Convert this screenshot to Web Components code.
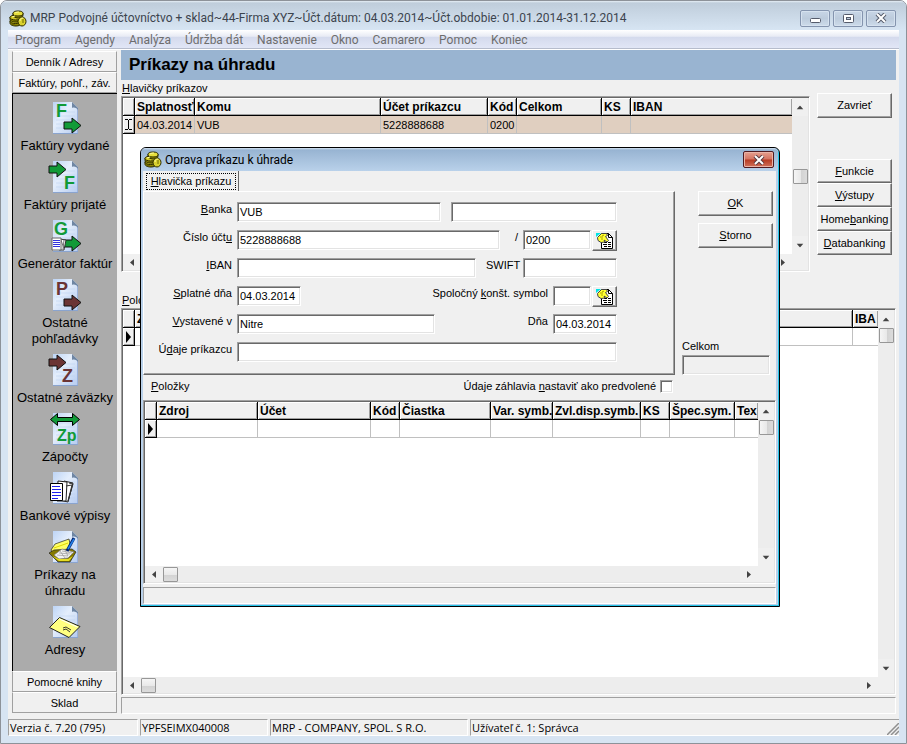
<!DOCTYPE html>
<html lang="sk">
<head>
<meta charset="utf-8">
<title>MRP Podvojné účtovníctvo + sklad</title>
<style>
	body {
		margin: 0;
		background: #fff;
		color: #000;
		font: 11px/15px "Liberation Sans", Arial, sans-serif;
	}
	.workspace {
		display: flex;
		flex: 1;
		gap: 4px;
		padding: 0 3px 0 4px;
	}
	.main {
		display: flex;
		flex: 1;
		flex-direction: column;
		min-width: 0;
		padding-bottom: 1px;
	}
	h1 {
		margin: 0;
		padding: 0 8px;
		background: #99b4d1;
		font-size: 17px;
		line-height: 30px;
	}
	.top {
		display: flex;
		gap: 7px;
		padding-right: 4px;
	}
	.orders {
		flex: 1;
		min-width: 0;
	}
	.orders mrp-grid {
		height: 176px;
	}
	.caption {
		padding-left: 1px;
		line-height: 16px;
	}
	.actions {
		display: flex;
		flex-direction: column;
		width: 75px;
		padding-top: 13px;
	}
	.actions mrp-button:first-child {
		margin-bottom: 41px;
	}
	.items {
		margin-top: 20px;
	}
	.main > mrp-grid {
		flex: 1;
	}
	.main > mrp-panel {
		height: 17px;
		margin-top: 2px;
	}
	.form {
		display: flex;
		flex-direction: column;
		gap: 8px;
	}
	.row {
		display: flex;
		gap: 10px;
		height: 20px;
	}
	.grow {
		flex: 1;
	}
	.end {
		margin-left: auto;
	}
	.pair {
		display: flex;
		gap: 1px;
	}
	.default {
		display: flex;
		justify-content: space-between;
		height: 25px;
		padding: 0 103px 0 8px;
		line-height: 22px;
	}
</style>
</head>
<body>

<mrp-window caption="MRP Podvojné účtovníctvo + sklad~44-Firma XYZ~Účt.dátum: 04.03.2014~Účt.obdobie: 01.01.2014-31.12.2014">
	<mrp-menu slot="menu" items="Program|Agendy|Analýza|Údržba dát|Nastavenie|Okno|Camarero|Pomoc|Koniec"></mrp-menu>

	<div class="workspace">
		<mrp-sidebar>
			<mrp-group slot="before">Denník / Adresy</mrp-group>
			<mrp-group slot="before">Faktúry, pohľ., záv.</mrp-group>
			<mrp-shortcut icon="issued">Faktúry vydané</mrp-shortcut>
			<mrp-shortcut icon="received">Faktúry prijaté</mrp-shortcut>
			<mrp-shortcut icon="generator">Generátor faktúr</mrp-shortcut>
			<mrp-shortcut icon="claims">Ostatné pohľadávky</mrp-shortcut>
			<mrp-shortcut icon="debts">Ostatné záväzky</mrp-shortcut>
			<mrp-shortcut icon="offsets">Zápočty</mrp-shortcut>
			<mrp-shortcut icon="statements">Bankové výpisy</mrp-shortcut>
			<mrp-shortcut icon="orders">Príkazy na úhradu</mrp-shortcut>
			<mrp-shortcut icon="addresses">Adresy</mrp-shortcut>
			<mrp-group slot="after">Pomocné knihy</mrp-group>
			<mrp-group slot="after">Sklad</mrp-group>
		</mrp-sidebar>

		<div class="main">
			<h1>Príkazy na úhradu</h1>
			<div class="top">
				<div class="orders">
					<div class="caption"><u>H</u>lavičky príkazov</div>
					<mrp-grid
						columns="Splatnosť:60|Komu:186|Účet príkazcu:107|Kód:29|Celkom:85|KS:29|IBAN"
						row="04.03.2014|VUB|5228888688|0200|||"
						marker="edit" selected scroll="0.5"></mrp-grid>
				</div>
				<div class="actions">
					<mrp-button>Zavrieť</mrp-button>
					<mrp-button flat><u>F</u>unkcie</mrp-button>
					<mrp-button flat><u>V</u>ýstupy</mrp-button>
					<mrp-button flat>Home<u>b</u>anking</mrp-button>
					<mrp-button flat><u>D</u>atabanking</mrp-button>
				</div>
			</div>
			<div class="caption items"><u>P</u>oložky</div>
			<mrp-grid columns="Zdroj|IBA:25" row="|" marker="current" scroll="0"></mrp-grid>
			<mrp-panel></mrp-panel>
		</div>
	</div>

	<mrp-statusbar slot="status" items="Verzia č. 7.20 (795):130|YPFSEIMX040008:128|MRP - COMPANY, SPOL. S R.O.:198|Užívateľ č. 1: Správca"></mrp-statusbar>

	<mrp-dialog slot="dialog" caption="Oprava príkazu k úhrade">
		<span slot="tab"><u>H</u>lavička príkazu</span>
		<div class="form">
			<div class="row">
				<mrp-field class="grow" lead value="VUB"><u>B</u>anka</mrp-field>
				<mrp-field bare value="" name="Názov banky" style="--box: 166px"></mrp-field>
			</div>
			<div class="row">
				<mrp-field class="grow" lead value="5228888688">Číslo účt<u>u</u></mrp-field>
				<div class="pair">
					<mrp-field value="0200" style="--box: 68px; --label: 8px">/</mrp-field>
					<mrp-lookup></mrp-lookup>
				</div>
			</div>
			<div class="row">
				<mrp-field class="grow" lead value=""><u>I</u>BAN</mrp-field>
				<mrp-field value="" style="--box: 94px; --label: 32px">SWIFT</mrp-field>
			</div>
			<div class="row">
				<mrp-field lead value="04.03.2014" style="--box: 64px"><u>S</u>platné dňa</mrp-field>
				<div class="pair end">
					<mrp-field value="" style="--box: 38px">Spoločný <u>k</u>onšt. symbol</mrp-field>
					<mrp-lookup></mrp-lookup>
				</div>
			</div>
			<div class="row">
				<mrp-field lead value="Nitre" style="--box: 198px"><u>V</u>ystavené v</mrp-field>
				<mrp-field class="end" value="04.03.2014" style="--box: 64px">Dňa</mrp-field>
			</div>
			<div class="row">
				<mrp-field class="grow" lead value="">Ú<u>d</u>aje príkazcu</mrp-field>
			</div>
		</div>
		<mrp-button slot="buttons"><u>O</u>K</mrp-button>
		<mrp-button slot="buttons"><u>S</u>torno</mrp-button>
		<mrp-field slot="total" stacked value="">Celkom</mrp-field>
		<div slot="items" class="default">
			<span><u>P</u>oložky</span>
			<mrp-check>Údaje záhlavia <u>n</u>astaviť ako predvolené</mrp-check>
		</div>
		<mrp-grid slot="grid"
			columns="Zdroj:101|Účet:113|Kód:29|Čiastka:91|Var. symb.:62|Zvl.disp.symb.:88|KS:29|Špec.sym.:65|Tex"
			row="||||||||" marker="current" scroll="0"></mrp-grid>
	</mrp-dialog>
</mrp-window>

<script>
//#region HELPERS
const ui_font = 'Roboto, "Noto Sans", sans-serif';

function define(name, html, setup) {
	const template = document.createElement("template");
	template.innerHTML = html;
	window.customElements.define(
		name,
		class extends HTMLElement {
			constructor() {
				super();
				this._shadowRoot = this.attachShadow({mode: "open"});
				this._shadowRoot.appendChild(template.content.cloneNode(true));
			}
			connectedCallback() {
				if (setup && !this._ready) {
					this._ready = true;
					setup(this, this._shadowRoot);
				}
			}
		}
	);
}
//#endregion HELPERS

//#region ICONS
const coins = /* html */ `
<svg width="18" height="17" viewBox="0 0 18 17" aria-hidden="true">
  <g stroke="#2c2a00" stroke-width="1">
    <path d="M1 11v2c0 2 3 3 6 3s5-1 5-3v-2z" fill="#8c8500"/>
    <ellipse cx="6.500" cy="11" rx="5.500" ry="2.500" fill="#cfc623"/>
    <path d="M1 7v2c0 2 3 3 6 3s5-1 5-3V7z" fill="#8c8500"/>
    <ellipse cx="6.500" cy="7.500" rx="5.500" ry="2.500" fill="#cfc623"/>
    <path d="M4 3v2c0 1 2 3 5 3s5-1 5-3V3z" fill="#8c8500"/>
    <ellipse cx="9" cy="3.500" rx="5" ry="2.500" fill="#e6de3c"/>
    <ellipse cx="13" cy="11.500" rx="4" ry="4.500" fill="#d9d12e"/>
  </g>
  <path d="M11 11c0-2 1-3 3-3M6 3c1-1 3-1 4-1M3 7l3-1" stroke="#fffb9a" fill="none"/>
  <path d="M14 9v4M2 14l4 1M6 6l4 1" stroke="#6d6800" fill="none"/>
</svg>`;

const page = /* html */ `
  <path d="M4 0h19l6 6v26H4z" fill="url(#sheet)"/>
  <path d="M4 31h25v1H4z" fill="#8aa4cf"/>
  <path d="M28 7h1v24h-1z" fill="#9bb2dc"/>
  <path d="M23 0l6 6v2c-1-2-4-3-6-2z" fill="#6f86a3"/>
  <path d="M7 10h19M7 14h19M7 18h19M7 22h19M7 26h19" stroke="#b9cff0" opacity=".5"/>`;
const arrow = (x, y, color) =>
	`<path d="M${x} ${y + 4}h8v-4l9 7.500-9 7.500v-4h-8z" fill="${color}" stroke="#111"/>`;
const letter = (text, x, y, color, size = 18) =>
	`<text x="${x}" y="${y}" fill="${color}" font-family="Liberation Sans" font-weight="bold" font-size="${size}">${text}</text>`;
const green = "#119a38";
const brown = "#6b3434";

const icons = {
	issued: letter("F", 7, 15, green) + arrow(15, 16, green),
	received: letter("F", 15, 28, green) + arrow(0, 1, green),
	generator: letter("G", 5, 15, green) + arrow(15, 16, green) + /* html */ `
    <path d="M11 19l6 1-2 10h-5z" fill="#fff" stroke="#333"/>
    <path d="M12 20l3 9M15 20l-1 9" stroke="#777"/>
    <path d="M3 18h9v12H3z" fill="#fff" stroke="#666"/>
    <path d="M4 20.500h7M4 22.500h7M4 24.500h7M4 26.500h7" stroke="#3333dd"/>`,
	claims: letter("P", 7, 16, brown) + arrow(15, 16, brown),
	debts: letter("Z", 13, 28, brown) + arrow(0, 1, brown),
	offsets: letter("Zp", 8, 28, green, 16) +
		`<path d="M1.500 6.500l7-6v4h15v-4l7 6-7 6v-4h-15v4z" fill="${green}" stroke="#000"/>`,
	statements: /* html */ `
    <path d="M15 9l9 2-5 19-8-2z" fill="#fff" stroke="#222"/>
    <path d="M9 9l9 1-1 19H8z" fill="#fff" stroke="#222"/>
    <path d="M17 14l6-1-4 16M20 11l4 1-5 17" fill="none" stroke="#333"/>
    <path d="M1.500 11.500h12v17h-12z" fill="#fff" stroke="#000"/>
    <path d="M3 14.500h8M3 17.500h9M3 20.500h9M3 23.500h9M3 26.500h6" stroke="#2020ee"/>`,
	orders: /* html */ `
    <path d="M2 19l4-6 14-5 1 5-4 8-11 5z" fill="#ffff66" stroke="#222" stroke-width=".700"/>
    <path d="M5 17l14-5" stroke="#e0d800"/>
    <path d="M0 22l5-3 18-1 4 3-6 10H9z" fill="#857a00" stroke="#222" stroke-width=".700"/>
    <path d="M5 24l8-6 12 3-6 6-9 1z" fill="#f2f2f2" stroke="#777" stroke-width=".700"/>
    <path d="M8 24l11 1M10 22l11 1M13 20l10 2M11 20l5 7M16 19l3 6" stroke="#999" stroke-width=".700"/>
    <path d="M3 25l7 5h10l4-5-5 3h-9z" fill="#e6de22"/>
    <path d="M18 20l7-13" stroke="#00236f" stroke-width="3"/>
    <path d="M19 18l6-10" stroke="#2480e8" stroke-width="1.500"/>`,
	addresses: /* html */ `
    <path d="M10.500 11.500l20.500 9-11 11-19.500-10z" fill="#ffff80" stroke="#222"/>
    <path d="M10.500 13l18 8" stroke="#fff"/>
    <path d="M14 22l3-1 5 3M14 24l3-1 4 3" stroke="#222" stroke-width=".900"/>`,
};
//#endregion ICONS

//#region WINDOW
define("mrp-window", /* html */ `
<style>
  * { box-sizing: border-box; }
  :host {
    display: flex;
    flex-direction: column;
    position: relative;
    box-sizing: border-box;
    min-height: 100vh;
    padding: 0 7px 7px;
    border: 1px solid #8d9299;
    border-radius: 7px 7px 0 0;
    background: #d7e4f2;
  }
  header {
    display: flex;
    align-items: center;
    gap: 3px;
    height: 29px;
    margin: 0 -7px;
    padding: 5px 10px 0 8px;
    border-radius: 6px 6px 0 0;
    background: linear-gradient(#e6eef6, #bfcddb 2px, #d7e5f3);
    color: #3c444e;
    font: 12px/20px ${ui_font};
  }
  .caption { flex: 1; min-width: 0; overflow: hidden; white-space: nowrap; }
  button {
    display: flex;
    align-items: center;
    justify-content: center;
    width: 30px;
    height: 17px;
    padding: 0;
    border: 1px solid #8494ae;
    border-radius: 2px;
    background: linear-gradient(#c8d6e6, #bccbdc 50%, #cddbea);
    box-shadow: inset 0 0 0 1px #d6e2ef;
  }
  .body {
    display: flex;
    flex: 1;
    flex-direction: column;
    background: #f0f0f0;
  }
</style>
<header>
  ${coins}
  <span class="caption"></span>
  <button type="button" aria-label="Minimalizovať"><svg width="12" height="11"><rect x="1.500" y="5.500" width="10" height="4" rx="1" fill="#fff" stroke="#555b6b"/></svg></button>
  <button type="button" aria-label="Maximalizovať"><svg width="11" height="9"><rect x=".5" y=".5" width="10" height="8" rx="1" fill="#fff" stroke="#555b6b"/><rect x="3.500" y="3.500" width="4" height="2" fill="#bccbdc" stroke="#555b6b"/></svg></button>
  <button type="button" aria-label="Zavrieť okno"><svg width="12" height="10"><path d="M2 1l8 8M10 1L2 9" stroke="#555b6b" stroke-width="4"/><path d="M2 1l8 8M10 1L2 9" stroke="#fff" stroke-width="2"/></svg></button>
</header>
<div class="body">
  <slot name="menu"></slot>
  <slot></slot>
  <slot name="status"></slot>
</div>
<slot name="dialog"></slot>
`, (host, root) => {
	root.querySelector(".caption").textContent = host.getAttribute("caption");
});

define("mrp-menu", /* html */ `
<style>
  :host {
    display: block;
    border-bottom: 1px solid #fff;
  }
  nav {
    display: flex;
    gap: 14px;
    height: 18px;
    padding: 0 7px;
    border-bottom: 1px solid #b6bccc;
    background: linear-gradient(#fff, #e8ebf5 35%, #d4daed 40%, #e1e6f6);
    font: 12px/20px ${ui_font};
  }
  button {
    padding: 0;
    border: 0;
    background: none;
    color: #6d6d6d;
    font: inherit;
    white-space: nowrap;
  }
</style>
<nav></nav>
`, (host, root) => {
	const nav = root.querySelector("nav");
	for (const item of host.getAttribute("items").split("|")) {
		const button = document.createElement("button");
		button.type = "button";
		button.textContent = item;
		nav.append(button);
	}
});

define("mrp-statusbar", /* html */ `
<style>
  :host {
    display: flex;
    gap: 2px;
    height: 17px;
    margin-top: 4px;
    font: 11px/17px "Open Sans", "Noto Sans", sans-serif;
  }
  span {
    box-sizing: border-box;
    padding-left: 1px;
    border: 1px solid;
    border-color: #a0a0a0 #fff #fff #a0a0a0;
    line-height: 16px;
    white-space: nowrap;
  }
  span:last-of-type { flex: 1; border-right: 0; }
  svg { margin: 4px 0 0 -14px; }
</style>
<svg width="12" height="12" aria-hidden="true"><path d="M0 12L12 0M4 12l8-8M8 12l4-4" stroke="#8f8f8f" stroke-width="1.500"/></svg>
`, (host, root) => {
	const grip = root.querySelector("svg");
	for (const item of host.getAttribute("items").split("|")) {
		const [, text, width] = item.match(/^(.*?)(?::(\d+))?$/);
		const span = document.createElement("span");
		span.textContent = text;
		if (width) span.style.width = `${width}px`;
		root.insertBefore(span, grip);
	}
});

define("mrp-panel", /* html */ `
<style>
  :host {
    display: block;
    box-sizing: border-box;
    border: 1px solid;
    border-color: #a0a0a0 #fff #fff #a0a0a0;
  }
</style>
`);
//#endregion WINDOW

//#region SIDEBAR
define("mrp-sidebar", /* html */ `
<style>
  :host {
    display: flex;
    flex-direction: column;
    box-sizing: border-box;
    width: 105px;
    padding: 1px 0 2px;
  }
  .list {
    flex: 1;
    padding: 8px 0 2px;
    border: solid #000;
    border-width: 1px 0 0 1px;
    background: #ababab;
  }
</style>
<slot name="before"></slot>
<div class="list"><slot></slot></div>
<slot name="after"></slot>
`);

define("mrp-group", /* html */ `
<style>
  :host { display: block; }
  button {
    width: 100%;
    height: 21px;
    padding: 1px 0 0;
    border: 1px solid;
    border-color: #fff #a0a0a0 #a0a0a0;
    background: #f0f0f0;
    color: #000;
    font: inherit;
    white-space: nowrap;
  }
</style>
<button type="button"><slot></slot></button>
`);

define("mrp-shortcut", /* html */ `
<style>
  :host { display: block; margin-bottom: 7px; }
  :host(:last-of-type) { margin-bottom: 0; }
  button {
    display: flex;
    flex-direction: column;
    align-items: center;
    gap: 4px;
    width: 100%;
    padding: 0;
    border: 0;
    background: none;
    color: #000;
    font: inherit;
    font-size: 13px;
    line-height: 16px;
  }
  span { max-width: 100px; }
</style>
<button type="button">
  <svg width="32" height="32" viewBox="0 0 32 32" overflow="visible" fill="none" aria-hidden="true">
    <defs>
      <linearGradient id="sheet" x1="0" y1="0" x2="1" y2="1">
        <stop offset="0" stop-color="#bdd4f5"/>
        <stop offset=".4" stop-color="#e4eefc"/>
        <stop offset="1" stop-color="#b5cbf0"/>
      </linearGradient>
    </defs>
    ${page}
    <g></g>
  </svg>
  <span><slot></slot></span>
</button>
`, (host, root) => {
	root.querySelector("g").innerHTML = icons[host.getAttribute("icon")];
});
//#endregion SIDEBAR

//#region CONTROLS
define("mrp-button", /* html */ `
<style>
  :host { display: block; }
  button {
    display: block;
    width: 100%;
    height: 25px;
    padding: 0;
    border: 1px solid;
    border-color: #fff #696969 #696969 #fff;
    background: #f0f0f0;
    box-shadow: inset -1px -1px #a0a0a0;
    color: #000;
    font: inherit;
    white-space: nowrap;
  }
  :host([flat]) button { height: 24px; }
</style>
<button type="button"><slot></slot></button>
`);

define("mrp-lookup", /* html */ `
<style>
  button {
    display: block;
    width: 25px;
    height: 21px;
    padding: 0 0 0 3px;
    border: 1px solid;
    border-color: #fff #696969 #696969 #fff;
    background: #f0f0f0;
    box-shadow: inset -1px -1px #a0a0a0;
  }
  svg { display: block; }
</style>
<button type="button" aria-label="Vybrať zo zoznamu">
  <svg width="18" height="17" viewBox="0 0 18 17">
    <path d="M5.500 1.500h7l4 4v11h-11z" fill="#fff" stroke="#000"/>
    <path d="M12.500 1.500v4h4" fill="none" stroke="#000"/>
    <path d="M8 10.500h3m1 0h3M7 12.500h4m1 0h3M8 14.500h3m1 0h3" stroke="#000"/>
    <path d="M0 1h5L0 5z" fill="#00e5e5"/>
    <path d="M1.500 5.500l4-4h5l1 2-2 1 3 4-1.500 1.500-3-2 1 2-4 .500-3-2z" fill="#ffff33" stroke="#444"/>
    <path d="M4 5h3M5 7h2M8 3l-2 1" stroke="#aaa200"/>
  </svg>
</button>
`);

define("mrp-field", /* html */ `
<style>
  :host { display: flex; gap: 5px; min-width: 0; }
  label {
    box-sizing: border-box;
    flex: none;
    width: var(--label, auto);
    text-align: right;
    white-space: nowrap;
  }
  :host([lead]) label { width: 84px; }
  :host([bare]) label { display: none; }
  input {
    box-sizing: border-box;
    width: var(--box, 100%);
    min-width: 0;
    height: 20px;
    margin: 0;
    padding: 0 1px;
    border: 1px solid;
    border-color: #a0a0a0 #fff #fff #a0a0a0;
    border-radius: 0;
    background: #fff;
    box-shadow: inset 1px 1px #696969, inset -1px -1px #e3e3e3;
    color: #000;
    font: inherit;
    text-indent: 1px;
  }
  :host([stacked]) { flex-direction: column; gap: 1px; }
  :host([stacked]) label { text-align: left; }
  :host([stacked]) input { background: #f0f0f0; }
</style>
<label for="box"><slot></slot></label>
<input id="box" type="text">
`, (host, root) => {
	const input = root.querySelector("input");
	input.value = host.getAttribute("value");
	if (host.hasAttribute("name")) input.setAttribute("aria-label", host.getAttribute("name"));
});

define("mrp-check", /* html */ `
<style>
  label { display: flex; align-items: center; gap: 4px; }
  input {
    appearance: none;
    width: 13px;
    height: 13px;
    margin: 0;
    border: 1px solid;
    border-color: #a0a0a0 #fff #fff #a0a0a0;
    background: #fff;
    box-shadow: inset 1px 1px #696969, inset -1px -1px #e3e3e3;
  }
</style>
<label><span><slot></slot></span><input type="checkbox"></label>
`);
//#endregion CONTROLS

//#region GRID
const markers = {
	edit: '<svg width="9" height="13"><path d="M1 1.500h3m1 0h3M4.500 2v9M1 11.500h3m1 0h3" stroke="#000"/></svg>',
	current: '<svg width="7" height="12"><path d="M1 0v12l5-6z" fill="#000"/></svg>',
};

define("mrp-grid", /* html */ `
<style>
  :host {
    display: grid;
    grid-template: minmax(0, 1fr) 16px / minmax(0, 1fr) 16px;
    box-sizing: border-box;
    min-height: 90px;
    border: 1px solid;
    border-color: #a0a0a0 #fff #fff #a0a0a0;
    background: #f0f0f0;
    box-shadow: inset 1px 1px #696969, inset -1px -1px #e3e3e3;
    padding: 1px;
  }
  .pane { overflow: hidden; background: #fff; }
  table {
    width: 100%;
    border-collapse: separate;
    border-spacing: 0;
    table-layout: fixed;
  }
  th, td {
    box-sizing: border-box;
    height: 18px;
    padding: 0 0 0 2px;
    overflow: hidden;
    text-align: left;
    white-space: nowrap;
  }
  th {
    border: solid #000;
    border-width: 0 1px 1px 0;
    background: #f0f0f0;
    box-shadow: inset 1px 1px #fff, inset -1px -1px #a0a0a0;
    font-size: 12px;
    line-height: 16px;
  }
  td {
    padding-top: 1px;
    border: solid #c0c0c0;
    border-width: 0 1px 1px 0;
  }
  th:last-child { border-right: 0; }
  td:last-child { border-right: 0; }
  td:first-child {
    padding: 0;
    border-color: #000;
    background: #f0f0f0;
    box-shadow: inset 1px 1px #fff, inset -1px -1px #a0a0a0;
  }
  :host([selected]) td:not(:first-child) { background: #e0cfc0; }
  td svg { display: block; margin: 0 auto; }
</style>
<div class="pane">
  <table>
    <colgroup><col style="width: 12px"></colgroup>
    <thead><tr><th></th></tr></thead>
    <tbody><tr><td></td></tr></tbody>
  </table>
</div>
<mrp-scrollbar vertical></mrp-scrollbar>
<mrp-scrollbar position="0"></mrp-scrollbar>
`, (host, root) => {
	root.querySelector("mrp-scrollbar").setAttribute("position", host.getAttribute("scroll"));
	root.querySelector("td").innerHTML = markers[host.getAttribute("marker")];
	const values = host.getAttribute("row").split("|");
	host.getAttribute("columns").split("|").forEach((column, index) => {
		const [title, width] = column.split(":");
		const col = document.createElement("col");
		if (width) col.style.width = `${width}px`;
		root.querySelector("colgroup").append(col);
		const th = document.createElement("th");
		th.scope = "col";
		th.textContent = title;
		root.querySelector("thead tr").append(th);
		const td = document.createElement("td");
		td.textContent = values[index];
		root.querySelector("tbody tr").append(td);
	});
});

// defined after the grid, which sets the position of its scrollbars
define("mrp-scrollbar", /* html */ `
<style>
  :host {
    display: flex;
    align-items: center;
    background: #ededed;
  }
  :host([vertical]) { flex-direction: column; }
  button {
    display: flex;
    align-items: center;
    justify-content: center;
    flex: none;
    width: 18px;
    height: 16px;
    padding: 0;
    border: 0;
    background: #f0f0f0;
  }
  :host([vertical]) button { width: 16px; height: 18px; }
  :host([vertical]) svg { transform: rotate(90deg); }
  i {
    box-sizing: border-box;
    flex: none;
    width: 15px;
    height: 15px;
    border: 1px solid #979797;
    border-radius: 1px;
    background: linear-gradient(#f5f5f5, #e9e9e9 50%, #d3d3d3 55%, #dcdcdc);
  }
  :host([vertical]) i { background: linear-gradient(90deg, #f5f5f5, #e9e9e9 50%, #d3d3d3 55%, #dcdcdc); }
</style>
<button type="button" aria-label="Späť"><svg width="4" height="7"><path d="M4 0v7L0 3.500z" fill="#444"/></svg></button>
<span id="before"></span>
<i></i>
<span id="after"></span>
<button type="button" aria-label="Ďalej"><svg width="4" height="7"><path d="M0 0v7l4-3.500z" fill="#444"/></svg></button>
`, (host, root) => {
	const position = Number(host.getAttribute("position"));
	root.querySelector("#before").style.flexGrow = position;
	root.querySelector("#after").style.flexGrow = 1 - position;
});
//#endregion GRID

//#region DIALOG
define("mrp-dialog", /* html */ `
<style>
  * { box-sizing: border-box; }
  :host {
    display: flex;
    flex-direction: column;
    position: absolute;
    top: 146px;
    left: 139px;
    box-sizing: border-box;
    width: 640px;
    min-height: 460px;
    padding: 0 3px 2px 2px;
    border: 1px solid #000;
    border-radius: 6px 6px 0 0;
    background: #b9d1ea;
    box-shadow: inset -1px -1px #25c4e8;
  }
  header {
    display: flex;
    align-items: center;
    gap: 3px;
    height: 23px;
    margin: 0 -2px;
    padding: 0 4px 0 3px;
    border-radius: 5px 5px 0 0;
    background: linear-gradient(#d5e3f1, #98b4d2 2px, #b9d1ea);
    font: 12px/20px ${ui_font};
  }
  .caption { flex: 1; }
  .close {
    display: flex;
    align-items: center;
    justify-content: center;
    width: 31px;
    height: 17px;
    padding: 0;
    border: 1px solid #4f1a20;
    border-radius: 2px;
    background: linear-gradient(#e5a090, #d47361 48%, #b63a22 52%, #d0705a);
    box-shadow: inset 0 0 0 1px #e9b3a7;
  }
  .body {
    display: flex;
    flex: 1;
    flex-direction: column;
    background: #f0f0f0;
  }
  .upper { display: flex; }
  .tabs { flex: 1; }
  .tab {
    display: block;
    width: 96px;
    height: 20px;
    padding: 1px 2px 1px 3px;
    border: 0;
    border-right: 1px solid #696969;
    background: none;
    color: #000;
    font: inherit;
  }
  .focus {
    display: block;
    height: 17px;
    border: 1px dotted #000;
    line-height: 15px;
    white-space: nowrap;
  }
  .page {
    padding: 10px 57px 12px 4px;
    border: 1px solid;
    border-color: #fff #696969 #696969 #fff;
    box-shadow: inset -1px -1px #a0a0a0;
  }
  .side {
    display: flex;
    flex-direction: column;
    width: 101px;
    padding: 20px 6px 0 7px;
  }
  .buttons {
    display: flex;
    flex: 1;
    flex-direction: column;
    gap: 7px;
    width: 75px;
    margin-left: 16px;
  }
  slot[name="grid"]::slotted(*) { flex: 1; }
  mrp-panel { height: 17px; margin-top: 3px; }
</style>
<header>
  ${coins}
  <span class="caption"></span>
  <button class="close" type="button" aria-label="Zavrieť"><svg width="12" height="10"><path d="M2 1l8 8M10 1L2 9" stroke="#5a3a40" stroke-width="4"/><path d="M2 1l8 8M10 1L2 9" stroke="#fff" stroke-width="2"/></svg></button>
</header>
<div class="body">
  <div class="upper">
    <div class="tabs">
      <button class="tab" type="button"><span class="focus"><slot name="tab"></slot></span></button>
      <div class="page"><slot></slot></div>
    </div>
    <div class="side">
      <div class="buttons"><slot name="buttons"></slot></div>
      <slot name="total"></slot>
    </div>
  </div>
  <slot name="items"></slot>
  <slot name="grid"></slot>
  <mrp-panel></mrp-panel>
</div>
`, (host, root) => {
	root.querySelector(".caption").textContent = host.getAttribute("caption");
});
//#endregion DIALOG
</script>
</body>
</html>
